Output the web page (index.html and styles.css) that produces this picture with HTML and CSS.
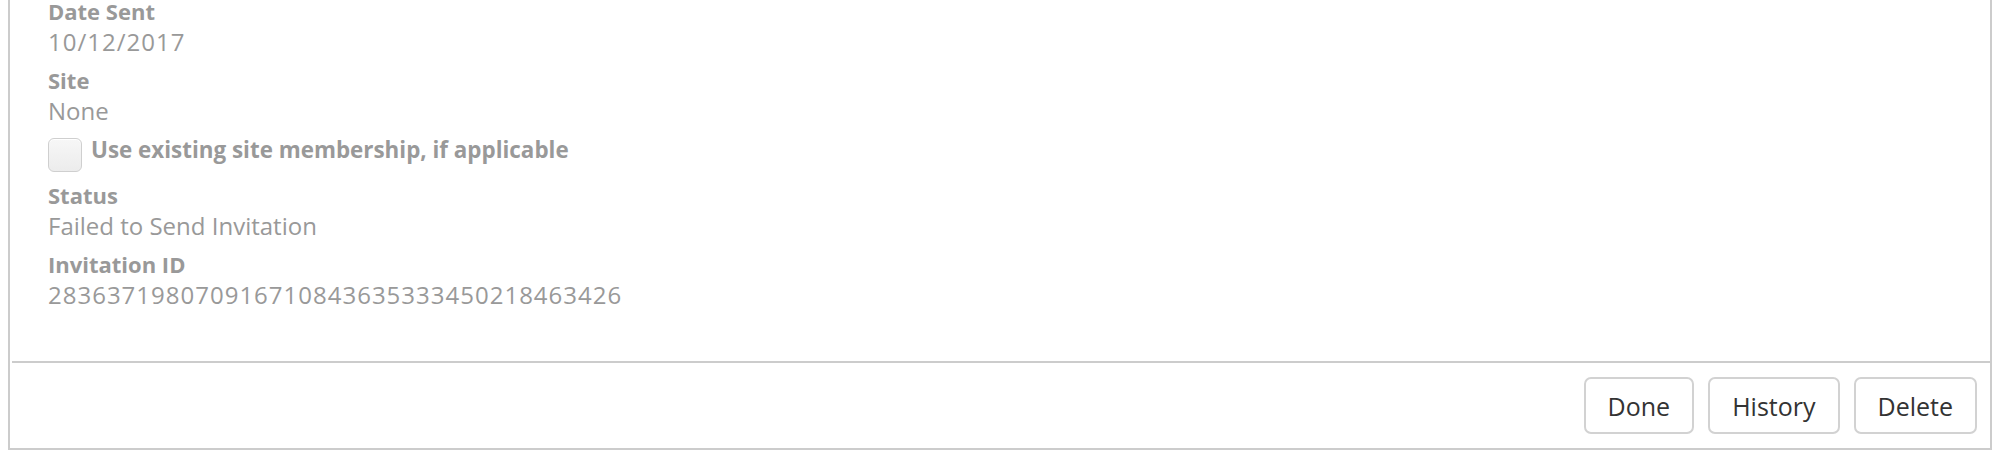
FILE: index.html
```html
<!DOCTYPE html>
<html lang="en">
<head>
<meta charset="utf-8">
<title>Invitation</title>
<link rel="stylesheet" href="styles.css">
</head>
<body>
<div class="panel">
  <div class="panel-body">
    <div class="field">
      <div class="label">Date Sent</div>
      <div class="value num">10/12/2017</div>
    </div>
    <div class="field">
      <div class="label">Site</div>
      <div class="value">None</div>
    </div>
    <label class="check-row">
      <span class="checkbox"></span>
      <span class="check-label">Use existing site membership, if applicable</span>
    </label>
    <div class="field">
      <div class="label">Status</div>
      <div class="value">Failed to Send Invitation</div>
    </div>
    <div class="field">
      <div class="label">Invitation ID</div>
      <div class="value num">283637198070916710843635333450218463426</div>
    </div>
  </div>
  <div class="panel-footer">
    <button class="btn" type="button">Done</button>
    <button class="btn" type="button">History</button>
    <button class="btn" type="button">Delete</button>
  </div>
</div>
</body>
</html>
```
FILE: styles.css
```css
html, body {
  margin: 0;
  padding: 0;
  background: #ffffff;
}

body {
  font-family: "Open Sans", "Noto Sans", sans-serif;
  color: #999999;
}

.panel {
  margin: 0 4px 0 8px;
  border: 2px solid #cccccc;
  border-top: none;
  background: #ffffff;
}

.panel-body {
  display: flex;
  flex-direction: column;
  align-items: flex-start;
  padding: 0 0 39px 38px;
}

.field {
  display: flex;
  flex-direction: column;
  margin-bottom: 9px;
}

.label {
  font-size: 22px;
  font-weight: 700;
  line-height: 23px;
  color: #999999;
}

.value {
  font-size: 24px;
  font-weight: 400;
  line-height: 37px;
  color: #999999;
}

.value.num {
  letter-spacing: 1px;
}

.check-row {
  display: flex;
  align-items: flex-start;
  gap: 9px;
  margin-bottom: 12px;
}

.checkbox {
  box-sizing: border-box;
  width: 34px;
  height: 34px;
  border: 1px solid #cfcfcf;
  border-radius: 6px;
  background: linear-gradient(#f7f7f7, #ececec);
  box-shadow: inset 0 1px 0 #ffffff;
}

.check-label {
  font-size: 22.4px;
  font-weight: 700;
  line-height: 24px;
  color: #999999;
}

.panel-footer {
  display: flex;
  justify-content: flex-end;
  gap: 14px;
  margin-left: 2px;
  border-top: 2px solid #cccccc;
  padding: 14px 13px 14px 0;
}

.btn {
  box-sizing: border-box;
  height: 57px;
  padding: 0 22px;
  border: 2px solid #d2d2d2;
  border-radius: 7px;
  background: #ffffff;
  font-family: "Open Sans", "Noto Sans", sans-serif;
  font-size: 25px;
  color: #333333;
  display: flex;
  align-items: center;
}
```
